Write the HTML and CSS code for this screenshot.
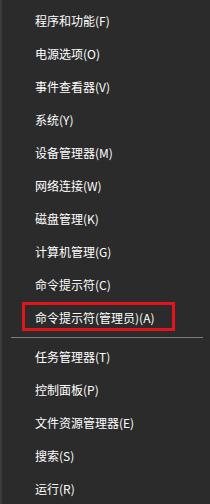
FILE: index.html
```html
<!DOCTYPE html>
<html lang="zh-CN">
<head>
    <meta charset="UTF-8">
    <meta name="viewport" content="width=device-width, initial-scale=1.0">
    <title>Win+X 菜单</title>
    <link rel="stylesheet" href="styles.css">
</head>
<body>
    <div class="menu">
        <ul class="menu-group first">
            <li>程序和功能(F)</li>
            <li>电源选项(O)</li>
            <li>事件查看器(V)</li>
            <li>系统(Y)</li>
            <li>设备管理器(M)</li>
            <li>网络连接(W)</li>
            <li>磁盘管理(K)</li>
            <li>计算机管理(G)</li>
            <li>命令提示符(C)</li>
            <li class="marked">命令提示符(管理员)(A)<span class="mark"></span></li>
        </ul>
        <div class="separator"></div>
        <ul class="menu-group">
            <li>任务管理器(T)</li>
            <li>控制面板(P)</li>
            <li>文件资源管理器(E)</li>
            <li>搜索(S)</li>
            <li>运行(R)</li>
        </ul>
    </div>
</body>
</html>
```
FILE: styles.css
```css
body {
    margin: 0;
    padding: 0;
    background-color: #2b2b2b;
    color: #ffffff;
    font-family: "Noto Sans CJK SC", "Microsoft YaHei", sans-serif;
    font-size: 12px;
    height: 504px;
    overflow: hidden;
}

.menu {
    border-left: 2px solid #3b3b3b;
    height: 100%;
    box-sizing: border-box;
}

.menu-group {
    list-style: none;
    margin: 0;
    padding: 0;
}

.menu-group.first {
    padding-top: 4px;
}

.menu-group li {
    height: 33px;
    line-height: 33px;
    padding-left: 33px;
    white-space: nowrap;
}

.marked {
    position: relative;
}

/* red annotation box drawn over the item */
.mark {
    position: absolute;
    left: 20px;
    top: 1px;
    width: 153px;
    height: 29px;
    border: 3px solid #e3141c;
    box-sizing: border-box;
}

.separator {
    height: 1px;
    margin: 3px 7px 2px 9px;
    background-color: #7d7d7d;
}
```
